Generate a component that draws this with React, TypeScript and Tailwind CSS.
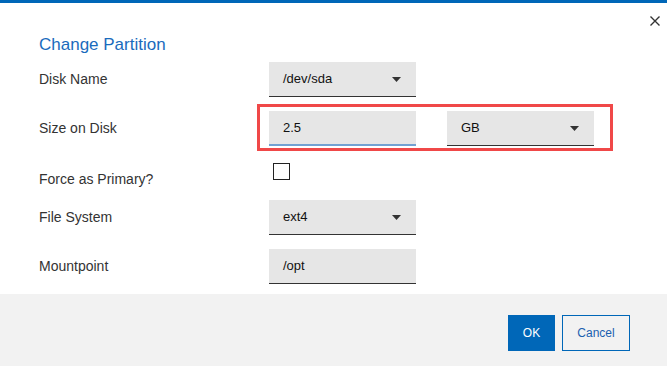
import React from "react";

function Caret() {
  return (
    <svg width="9" height="5" viewBox="0 0 9 5" className="shrink-0">
      <path d="M0 0 H9 L4.5 5 Z" fill="#333" />
    </svg>
  );
}

function Select({ value, w = "w-[147px]" }: { value: string; w?: string }) {
  return (
    <div className={`${w} h-[35px] bg-[#e6e6e6] border-b border-[#333] flex items-center justify-between pl-[14px] pr-[15px] text-[13px] text-[#111]`}>
      <span>{value}</span>
      <Caret />
    </div>
  );
}

export default function App() {
  const font = { fontFamily: '"Liberation Sans", Arial, sans-serif' };
  return (
    <div style={font} className="relative w-[667px] h-[366px] bg-white border-t-[3px] border-[#0067b8] flex flex-col overflow-hidden">
      <button className="absolute right-[4px] top-[9px] w-[17px] h-[17px] flex items-center justify-center">
        <svg width="10" height="10" viewBox="0 0 10 10">
          <path d="M0.5 0.5 L9.5 9.5 M9.5 0.5 L0.5 9.5" stroke="#333" strokeWidth="1.4" />
        </svg>
      </button>
      <div className="flex-1 pl-[39px]">
        <h1 className="mt-[32px] text-[17px] leading-[20px] text-[#1a6bbd]">Change Partition</h1>

        <div className="mt-[7px] flex items-center h-[35px]">
          <div className="w-[230px] text-[14px] text-[#333]">Disk Name</div>
          <Select value="/dev/sda" />
        </div>

        <div className="mt-[14px] flex items-center h-[35px] relative">
          <div className="w-[230px] text-[14px] text-[#333]">Size on Disk</div>
          <div className="relative flex items-center gap-[31px]">
            <div className="absolute left-[-12px] top-[-7px] w-[356px] h-[47px] border-[3px] border-[#f04848] pointer-events-none" />
            <div className="w-[147px] h-[35px] bg-[#e6e6e6] border-b-2 border-[#72a1d2] flex items-center pl-[14px] text-[13px] text-[#111]">
              2.5
            </div>
            <Select value="GB" />
          </div>
        </div>

        <div className="mt-[17px] flex items-start h-[37px]">
          <div className="w-[234px] mt-[8px] text-[14px] leading-[16px] text-[#333]">Force as Primary?</div>
          <div className="w-[17px] h-[17px] border-[1.5px] border-[#222] bg-white" />
        </div>

        <div className="flex items-center h-[35px]">
          <div className="w-[230px] text-[14px] text-[#333]">File System</div>
          <Select value="ext4" />
        </div>

        <div className="mt-[14px] flex items-center h-[35px]">
          <div className="w-[230px] text-[14px] text-[#333]">Mountpoint</div>
          <div className="w-[147px] h-[35px] bg-[#e6e6e6] border-b border-[#333] flex items-center pl-[14px] text-[13px] text-[#111]">
            /opt
          </div>
        </div>
      </div>
      <div className="h-[72px] bg-[#f2f2f2] flex items-start justify-end pr-[37px] pt-[21px] gap-[7px]">
        <button className="w-[47px] h-[36px] bg-[#0067b8] text-white text-[12px]">OK</button>
        <button className="w-[68px] h-[36px] border-[1.5px] border-[#0067b8] text-[#1a5fb0] text-[12px] bg-[#f2f2f2]">Cancel</button>
      </div>
    </div>
  );
}
